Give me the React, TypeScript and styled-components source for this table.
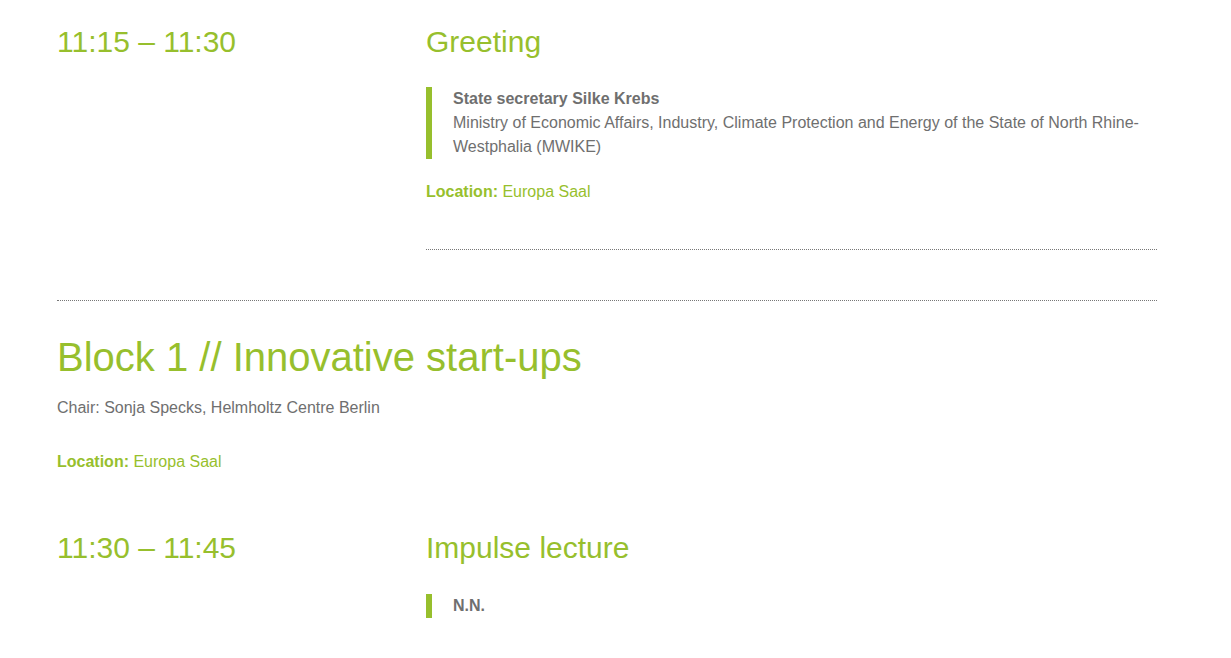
import styled, { createGlobalStyle } from "styled-components";

const green = "#97bf2d";
const gray = "#6f6f6f";

const GlobalStyle = createGlobalStyle`
  body {
    margin: 0;
    background: #fff;
    font-family: "Liberation Sans", Arial, sans-serif;
  }
`;

const Page = styled.div`
  width: 1100px;
  margin-left: 57px;
  padding-top: 22px;
`;

const Row = styled.section<{ $top?: number }>`
  display: grid;
  grid-template-columns: 369px 1fr;
  margin-top: ${(p) => p.$top ?? 0}px;
`;

const Time = styled.div`
  color: ${green};
  font-size: 30px;
  line-height: 40px;
`;

const Content = styled.div``;

const Title = styled.h3<{ $gap?: number }>`
  margin: 0 0 ${(p) => p.$gap ?? 25}px;
  color: ${green};
  font-weight: normal;
  font-size: 30px;
  line-height: 40px;
`;

const Speaker = styled.div`
  border-left: 6px solid ${green};
  padding-left: 21px;
  color: ${gray};
  font-size: 16px;
  line-height: 24px;
`;

const Name = styled.strong`
  display: block;
  font-size: 16px;
  font-weight: bold;
`;

const Location = styled.p<{ $top: number }>`
  margin: ${(p) => p.$top}px 0 0;
  color: ${green};
  font-size: 16px;
  line-height: 24px;
  b {
    font-weight: bold;
  }
`;

const Divider = styled.hr<{ $top: number }>`
  margin: ${(p) => p.$top}px 0 0;
  border: 0;
  border-top: 1px dotted #777;
  height: 0;
`;

const BlockTitle = styled.h2`
  margin: 31px 0 0;
  color: ${green};
  font-weight: normal;
  font-size: 40px;
  line-height: 50px;
`;

const Chair = styled.p`
  margin: 14px 0 0;
  color: ${gray};
  font-size: 16px;
  line-height: 24px;
`;

export default function App() {
  return (
    <Page>
      <GlobalStyle />
      <Row>
        <Time>11:15 – 11:30</Time>
        <Content>
          <Title>Greeting</Title>
          <Speaker>
            <Name>State secretary Silke Krebs</Name>
            Ministry of Economic Affairs, Industry, Climate Protection and Energy of the State of North Rhine-Westphalia (MWIKE)
          </Speaker>
          <Location $top={21}>
            <b>Location:</b> Europa Saal
          </Location>
          <Divider $top={45} />
        </Content>
      </Row>
      <Divider $top={50} />
      <BlockTitle>Block 1 // Innovative start-ups</BlockTitle>
      <Chair>Chair: Sonja Specks, Helmholtz Centre Berlin</Chair>
      <Location $top={30}>
        <b>Location:</b> Europa Saal
      </Location>
      <Row $top={54}>
        <Time>11:30 – 11:45</Time>
        <Content>
          <Title $gap={26}>Impulse lecture</Title>
          <Speaker>
            <Name>N.N.</Name>
          </Speaker>
        </Content>
      </Row>
    </Page>
  );
}
